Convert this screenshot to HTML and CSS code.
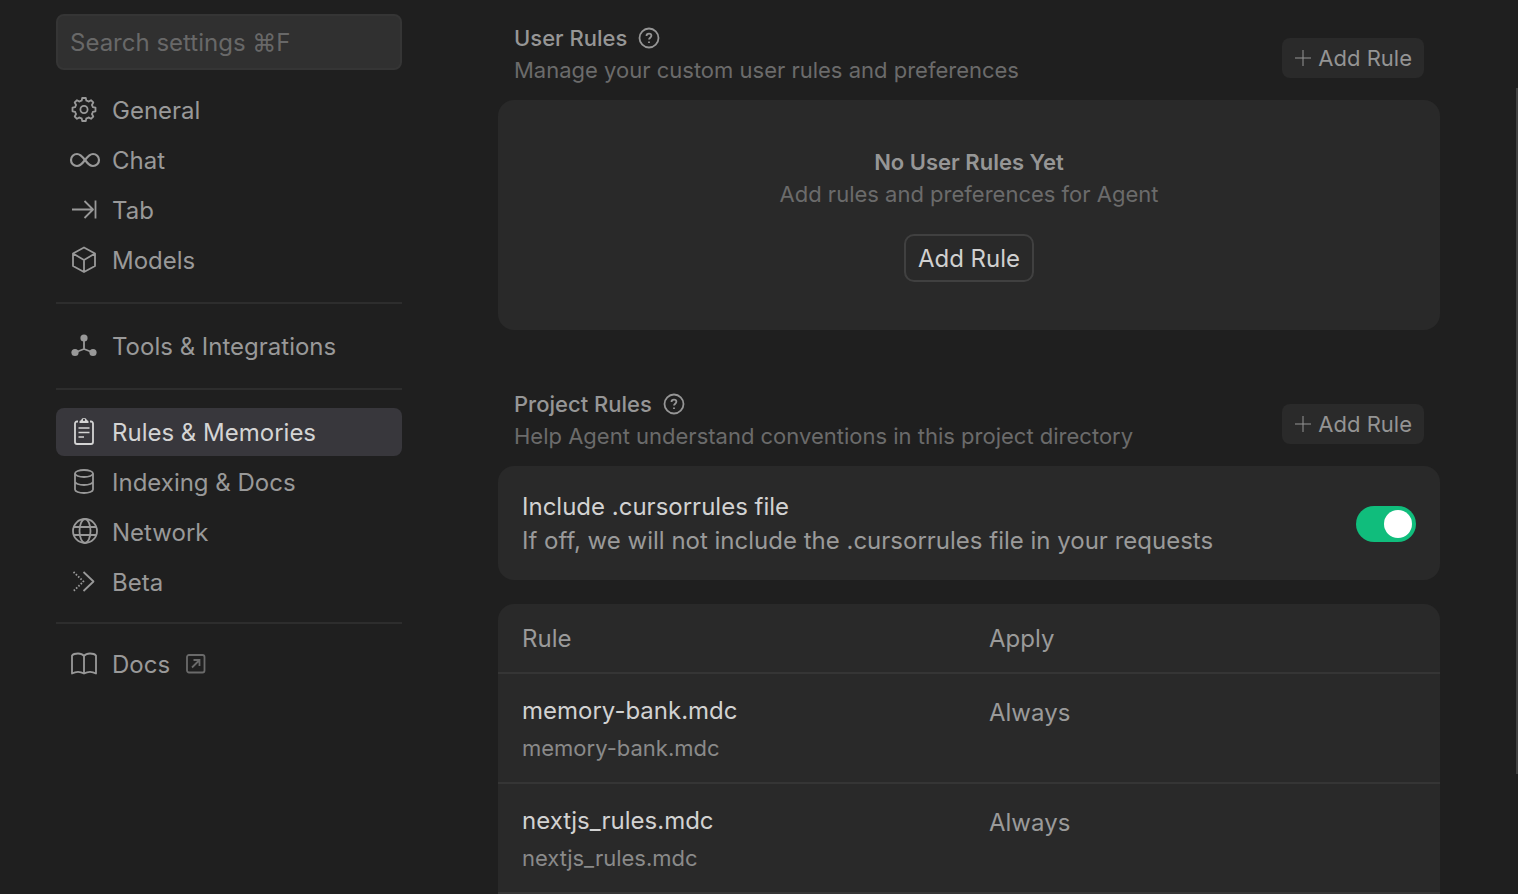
FILE: index.html
```
<!DOCTYPE html>
<html lang="en">
<head>
  <meta charset="UTF-8">
  <meta name="viewport" content="width=device-width, initial-scale=1.0">
  <title>Settings - Rules &amp; Memories</title>
  <link rel="stylesheet" href="styles.css">
</head>
<body>

  <div class="layout">
    <aside class="sidebar">
      <input class="search" type="text" placeholder="Search settings ⌘F" aria-label="Search settings">

      <nav class="nav">
        <a class="nav-item" href="#general">
          <svg class="icon" viewBox="0 0 28 28"><g transform="translate(14 13.5)"><path d="M-1.8-11.5H1.8L2.3-8.8Q3.4-8.6 4.5-7.9L7-9.3L9.3-7L7.9-4.5Q8.6-3.4 8.8-2.3L11.5-1.8V1.8L8.8 2.3Q8.6 3.4 7.900 4.5L9.3 7L7 9.3L4.5 7.9Q3.4 8.6 2.3 8.8L1.8 11.5H-1.8L-2.3 8.8Q-3.4 8.6-4.5 7.9L-7 9.3L-9.3 7L-7.9 4.5Q-8.6 3.4-8.8 2.3L-11.5 1.8V-1.8L-8.8-2.3Q-8.6-3.4-7.9-4.5L-9.3-7L-7-9.3L-4.5-7.9Q-3.4-8.6-2.3-8.8Z"/><circle r="3.6"/></g></svg>
          General
        </a>
        <a class="nav-item" href="#chat">
          <svg class="icon" viewBox="0 0 28 28"><path stroke-width="2.2" d="M15 14C12 10 9.5 8 7 8a6 6 0 0 0 0 12c2.5 0 5-2 8-6s5.5-6 8-6a6 6 0 0 1 0 12c-2.5 0-5-2-8-6z"/></svg>
          Chat
        </a>
        <a class="nav-item" href="#tab">
          <svg class="icon" viewBox="0 0 28 28"><path d="M2 13.5H23M14.500 5L23 13.5L14.5 22M25.5 4.500V22.5"/></svg>
          Tab
        </a>
        <a class="nav-item" href="#models">
          <svg class="icon" viewBox="0 0 28 28"><path d="M14 1.5L25 7.5V20L14 26L3 20V7.5ZM3 7.5L14 14L25 7.5M14 14V26"/></svg>
          Models
        </a>
        <hr>
        <a class="nav-item" href="#tools">
          <svg class="icon" viewBox="0 0 28 28"><path d="M14 7V17L5 20.5M14 17L23 20.5"/><g class="solid"><circle cx="14" cy="6" r="3.600"/><circle cx="5" cy="20.5" r="3.6"/><circle cx="23" cy="20.5" r="3.6"/></g></svg>
          Tools &amp; Integrations
        </a>
        <hr>
        <a class="nav-item active" href="#rules" aria-current="page">
          <svg class="icon" viewBox="0 0 28 28"><path d="M8 3.5H7a2 2 0 0 0-2 2V24a2 2 0 0 0 2 2H21a2 2 0 0 0 2-2V5.5a2 2 0 0 0-2-2H20"/><path stroke-width="1.5" d="M8.5 10H19.5M8.5 14.5H19.5M8.5 19H14"/><path class="solid" fill-rule="evenodd" d="M9.5 5V3.5Q9.5 2.5 11 2.3A3.100 3.1 0 0 1 17 2.3Q18.5 2.5 18.5 3.5V5ZM14 .8A1.1 1.1 0 1 0 14 3A1.1 1.1 0 1 0 14 .8Z"/></svg>
          Rules &amp; Memories
        </a>
        <a class="nav-item" href="#indexing">
          <svg class="icon" viewBox="0 0 28 28"><ellipse cx="14" cy="5.5" rx="9" ry="3.5"/><path d="M5 5.5V21.5C5 23.500 9 25 14 25S23 23.5 23 21.5V5.5M5 13.5C5 15.5 9 17 14 17S23 15.5 23 13.5"/></svg>
          Indexing &amp; Docs
        </a>
        <a class="nav-item" href="#network">
          <svg class="icon" viewBox="0 0 28 28"><circle cx="15" cy="13" r="12"/><ellipse cx="15" cy="13" rx="5.500" ry="12"/><path d="M4 9H26M4 17H26"/></svg>
          Network
        </a>
        <a class="nav-item" href="#beta">
          <svg class="icon" viewBox="0 0 28 28"><path d="M13.5 4L23.5 13.5L13.5 23"/><path stroke-dasharray="1.6 1.6" d="M3.5 4L13.5 13.5L3.5 23"/></svg>
          Beta
        </a>
      </nav>

      <div class="nav-footer">
        <a class="nav-item" href="#docs">
          <svg class="icon" viewBox="0 0 28 28"><path d="M14 6C12.500 4.200 10.500 3.500 8 3.500S3 4.300 2 5.500V23.500C5.500 21.500 10.500 21.500 14 23.500C17.500 21.500 22.500 21.500 26 23.500V5.500C25 4.300 22.500 3.500 20 3.500S15.500 4.200 14 6V24"/></svg>
          Docs
          <svg class="icon-external" viewBox="0 0 20 20"><rect x="1" y="1" width="17.500" height="17.500" rx="2"/><path d="M6 13.500L13 6.500M7.500 6H13.500V12"/></svg>
        </a>
      </div>
    </aside>

    <main class="content">
      <section>
        <header class="section-header">
          <div class="section-text">
            <h2>User Rules
              <svg class="icon-help" viewBox="0 0 22 22"><circle cx="11" cy="11" r="9.5"/><path d="M8.5 9C8.5 7.4 9.5 6.6 11 6.6S13.400 7.500 13.4 8.800C13.4 10.600 11 10.800 11 12.600M11 14.400V16"/></svg>
            </h2>
            <p>Manage your custom user rules and preferences</p>
          </div>
          <button class="btn-add" type="button">
            <svg class="icon-plus" viewBox="0 0 18 18"><path d="M9 1V17M1 9H17"/></svg>
            Add Rule
          </button>
        </header>
        <div class="card empty">
          <h3>No User Rules Yet</h3>
          <p>Add rules and preferences for Agent</p>
          <button class="btn-outline" type="button">Add Rule</button>
        </div>
      </section>

      <section>
        <header class="section-header">
          <div class="section-text">
            <h2>Project Rules
              <svg class="icon-help" viewBox="0 0 22 22"><circle cx="11" cy="11" r="9.5"/><path d="M8.5 9C8.5 7.4 9.5 6.6 11 6.6S13.400 7.500 13.4 8.800C13.4 10.600 11 10.800 11 12.600M11 14.400V16"/></svg>
            </h2>
            <p>Help Agent understand conventions in this project directory</p>
          </div>
          <button class="btn-add" type="button">
            <svg class="icon-plus" viewBox="0 0 18 18"><path d="M9 1V17M1 9H17"/></svg>
            Add Rule
          </button>
        </header>

        <div class="card setting">
          <label for="cursorrules">
            <span class="setting-title">Include .cursorrules file</span>
            <span class="setting-desc">If off, we will not include the .cursorrules file in your requests</span>
          </label>
          <input class="toggle" type="checkbox" id="cursorrules" checked>
        </div>

        <div class="card rules">
          <table>
            <thead>
              <tr>
                <th>Rule</th>
                <th>Apply</th>
              </tr>
            </thead>
            <tbody>
              <tr>
                <td>
                  <div class="rule-name">memory-bank.mdc</div>
                  <div class="rule-path">memory-bank.mdc</div>
                </td>
                <td>Always</td>
              </tr>
              <tr>
                <td>
                  <div class="rule-name">nextjs_rules.mdc</div>
                  <div class="rule-path">nextjs_rules.mdc</div>
                </td>
                <td>Always</td>
              </tr>
            </tbody>
          </table>
        </div>
      </section>
    </main>
  </div>

  <div class="scroll-thumb"></div>

</body>
</html>
```
FILE: styles.css
```
* { box-sizing: border-box; }
body { margin: 0; background: #1f1f1f; color: #9a9a9a; font-family: Inter, "Liberation Sans", sans-serif; font-size: 24px; line-height: 34px; height: 100vh; overflow: hidden; }
h2, h3, p { margin: 0; font-size: 22px; line-height: 32px; font-weight: 400; }
button, input { font-family: inherit; font-size: 24px; }
svg { flex: none; fill: none; stroke: currentColor; stroke-width: 1.8; overflow: visible; }

.layout { display: flex; gap: 96px; padding: 14px 78px 0 56px; }

/* sidebar */
.sidebar { flex: none; width: 346px; }
.search { display: block; width: 100%; height: 56px; padding: 0 12px; background: #303030; border: 2px solid #353535; border-radius: 8px; color: #ccc; }
.search::placeholder { color: #686868; opacity: 1; }
.nav { display: flex; flex-direction: column; gap: 2px; margin-top: 16px; }
.nav hr { width: 100%; margin: 16px 0; border: 0; border-top: 2px solid #2d2d2d; }
.nav-item { display: flex; align-items: center; gap: 14px; height: 48px; padding: 2px 14px 0; border-radius: 8px; color: #999; text-decoration: none; }
.nav-item.active { background: #38373c; color: #d4d4d4; }
.nav-item svg { margin-bottom: 2px; }
.nav-footer { margin-top: 16px; padding-top: 16px; border-top: 2px solid #2d2d2d; }
.icon { width: 28px; height: 28px; stroke-linejoin: round; }
.icon .solid { fill: currentColor; stroke: none; }
.icon-external { width: 20px; height: 20px; margin-left: 2px; color: #6a6a6a; }

/* main column */
.content { flex: 1; min-width: 0; padding-top: 8px; }
.section-header { display: flex; align-items: center; justify-content: space-between; padding: 0 16px; margin-bottom: 6px; }
.section-text { padding-bottom: 8px; }
.section-text h2 { display: flex; align-items: center; gap: 11px; font-weight: 500; color: #969696; }
.section-text p, .empty p { color: #6b6b6b; }
.icon-help { width: 22px; height: 22px; }
section + section { margin-top: 58px; }

.btn-add { display: flex; align-items: center; gap: 6px; height: 40px; padding: 0 12px; background: #2a2a2a; border: 0; border-radius: 8px; color: #949494; font-size: 22px; }
.icon-plus { width: 18px; height: 18px; stroke-width: 1; }
.btn-outline { height: 48px; margin-top: 24px; padding: 0 12px; background: none; border: 2px solid #404040; border-radius: 10px; color: #d0d0d0; }

.card { background: #292929; border-radius: 16px; }
.empty { padding: 46px 24px 48px; text-align: center; }
.empty h3 { font-weight: 600; color: #969696; }
.setting { display: flex; align-items: center; justify-content: space-between; padding: 24px 24px 22px; }
.setting span { display: block; }
.setting-title, .rule-name { color: #d2d2d2; }
.toggle { appearance: none; width: 60px; height: 36px; margin: 0; padding: 4px; background: #10bd7c; border-radius: 18px; }
.toggle::before { content: ""; display: block; width: 28px; height: 28px; border-radius: 50%; background: #fff; }
.toggle:checked::before { margin-left: auto; }

.rules { margin-top: 24px; border-radius: 16px 16px 0 0; }
table { width: 100%; border-collapse: separate; border-spacing: 0; table-layout: fixed; }
th, td { border-bottom: 2px solid #353535; text-align: left; vertical-align: top; font-weight: 400; }
th { padding: 18px 24px 16px; }
td { padding: 20px 24px 16px; }
th:last-child, td:last-child { padding-left: 20px; }
td:last-child { padding-top: 22px; }
.rule-path { margin-top: 4px; padding-bottom: 2px; font-size: 22px; line-height: 32px; color: #8a8a8a; }

.scroll-thumb { position: absolute; top: 88px; right: 0; bottom: 120px; width: 2px; background: #414141; }
```
